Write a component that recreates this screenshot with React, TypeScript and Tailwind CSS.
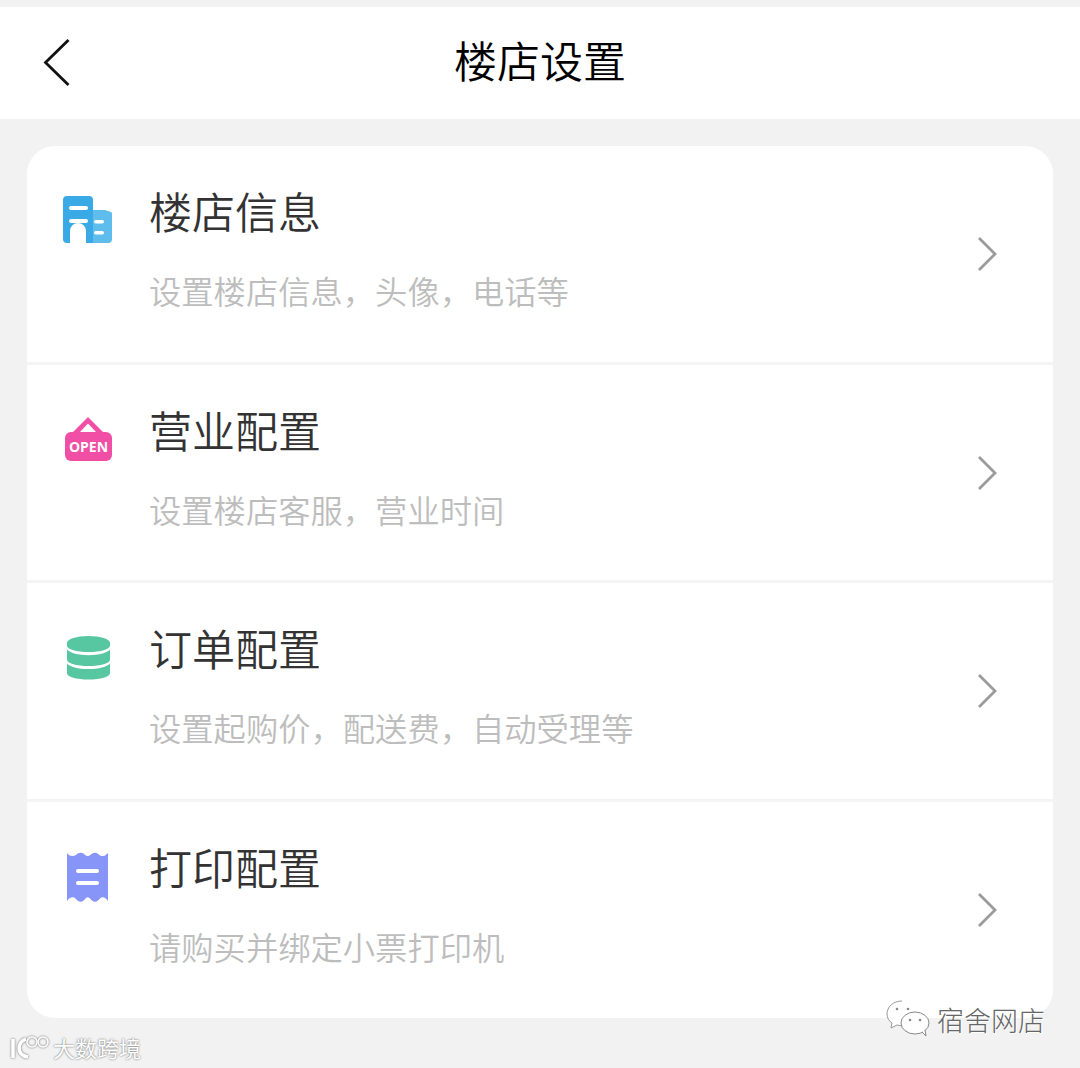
import type { ReactNode } from "react";

const rows: { title: string; desc: string; icon: ReactNode }[] = [
  {
    title: "楼店信息",
    desc: "设置楼店信息，头像，电话等",
    icon: (
      <svg width="50" height="50" viewBox="0 0 50 50">
        <path d="M30 15h12l6 2a2 2 0 0 1 1 2v25a4 4 0 0 1-4 4H30z" fill="#5fbdee" />
        <path
          d="M4 1h22a4 4 0 0 1 4 4v43h-7V36a8 8 0 0 0-16 0v12H4a4 4 0 0 1-4-4V5a4 4 0 0 1 4-4z"
          fill="#3aaae6"
        />
        <rect x="6" y="11" width="19" height="4" rx="2" fill="#fff" />
        <rect x="6" y="24" width="19" height="4" rx="2" fill="#fff" />
        <rect x="31" y="25" width="10" height="3.500" rx="1.700" fill="#fff" />
        <rect x="31" y="36" width="10" height="3.500" rx="1.700" fill="#fff" />
      </svg>
    ),
  },
  {
    title: "营业配置",
    desc: "设置楼店客服，营业时间",
    icon: (
      <svg width="50" height="50" viewBox="0 0 50 50">
        <path d="M25 3 10 18h7l8-8.500 8 8.500h7z" fill="#f04fa5" />
        <rect x="2" y="18" width="47" height="29" rx="6" fill="#f04fa5" />
        <text
          x="25.500"
          y="38"
          textAnchor="middle"
          fontSize="14"
          fontWeight="700"
          fill="#fff"
          fontFamily="'Open Sans', sans-serif"
        >
          OPEN
        </text>
      </svg>
    ),
  },
  {
    title: "订单配置",
    desc: "设置起购价，配送费，自动受理等",
    icon: (
      <svg width="50" height="52" viewBox="0 0 50 52">
        <path d="M4 11c0-4 9.500-7 21.500-7S47 7 47 11v2.500c0 4-9.500 6.500-21.500 6.500S4 17.500 4 13.500z" fill="#56c7a0" />
        <path d="M4 17.500c3 3.500 11 5.700 21.500 5.700S44 21 47 17.500V27.500c0 4-9.500 6.500-21.500 6.500S4 31.500 4 27.500z" fill="#56c7a0" />
        <path d="M4 31.500c3 3.500 11 5.500 21.500 5.500S44 35 47 31.500V41c0 4-9.500 6.500-21.500 6.500S4 45 4 41z" fill="#56c7a0" />
      </svg>
    ),
  },
  {
    title: "打印配置",
    desc: "请购买并绑定小票打印机",
    icon: (
      <svg width="50" height="52" viewBox="0 0 50 52">
        <path
          d="M4 2c1 2 3 3 6 3s4-3.300 7.700-3.300S22 5 24.700 5 28.500 1.700 32 1.700 36 5 39.300 5 43 3.500 45 2v48c-2-2.500-3-3.700-5.700-3.700S36 50.700 32 50.700s-4.500-4.400-7.300-4.400-3 4.400-7 4.400S13 46.300 10 46.300 6 47.500 4 50z"
          fill="#8895f8"
        />
        <rect x="13" y="18" width="23" height="4" rx="2" fill="#fff" />
        <rect x="13" y="30" width="23" height="4" rx="2" fill="#fff" />
      </svg>
    ),
  },
];

export default function App() {
  return (
    <div className="relative h-[1068px] overflow-hidden bg-[#f2f2f2] pt-[7px] font-['Noto_Sans_CJK_SC',sans-serif]">
      {/* Header */}
      <header className="relative flex h-[112px] items-center justify-center bg-white pb-[8px]">
        <svg className="absolute left-[42px] top-[31px]" width="30" height="48" viewBox="0 0 30 48">
          <path d="M26.500 2 3.500 24.500 26.500 47" fill="none" stroke="#111" strokeWidth="2.800" />
        </svg>
        <h1 className="text-[43px] font-[350] leading-none text-black">楼店设置</h1>
      </header>

      {/* Card */}
      <main className="mx-[27px] mt-[27px] overflow-hidden rounded-[28px] bg-white">
        {rows.map((row, i) => (
          <div
            key={row.title}
            className={
              i < 3
                ? "flex h-[218.670px] border-b-[3px] border-[#f4f4f4] pl-[36px] pr-[56px]"
                : "flex h-[216px] pl-[36px] pr-[56px]"
            }
          >
            <div className="mt-[49px] w-[86px] shrink-0">{row.icon}</div>
            <div className="flex-1 pt-[33px]">
              <div className="text-[43px] font-[350] leading-[62px] text-[#333]">{row.title}</div>
              <div className="mt-[26px] text-[32.300px] font-[350] leading-[46px] text-[#bdbdbd]">{row.desc}</div>
            </div>
            <svg className="mt-[90px]" width="20" height="36" viewBox="0 0 20 36">
              <path d="M2 2l16 16L2 34" fill="none" stroke="#9b9b9b" strokeWidth="2.800" />
            </svg>
          </div>
        ))}
      </main>

      {/* Watermarks */}
      <div className="absolute left-[9px] top-[1034px] flex items-center gap-[2px] text-[22px] leading-none text-white [text-shadow:0_0_2px_#555]">
        <svg className="drop-shadow-[0_0_1px_#666]" width="42" height="26" viewBox="0 0 42 26">
          <path d="M4 5v19M17 5C8 8 7 21 19 23" fill="none" stroke="#fff" strokeWidth="3.500" />
          <circle cx="23" cy="8" r="5" fill="none" stroke="#fff" strokeWidth="1.500" />
          <circle cx="34" cy="8" r="5" fill="none" stroke="#fff" strokeWidth="1.500" />
        </svg>
        <span>大数跨境</span>
      </div>
      <div className="absolute left-[886px] top-[1000px] flex items-center gap-[5px] text-[27px] font-light leading-none text-[#666] [text-shadow:1px_1px_0_#fff]">
        <svg width="46" height="38" viewBox="0 0 46 38">
          <path d="M16 1C7 1 1 7 1 14c0 4 2 7 5 9l-1 5 6-3c2 .5 3 .6 5 .6" fill="#fff" stroke="#999" strokeWidth="1" />
          <ellipse cx="29" cy="23" rx="14" ry="11" fill="#fff" stroke="#888" strokeWidth="1" />
          <path d="M36 32l4 4-1-6" fill="#fff" stroke="#888" strokeWidth="1" />
          <circle cx="11" cy="9" r="1.300" fill="#888" />
          <circle cx="22" cy="9" r="1.300" fill="#888" />
          <circle cx="24" cy="20" r="1.300" fill="#888" />
          <circle cx="34" cy="20" r="1.300" fill="#888" />
        </svg>
        <span>宿舍网店</span>
      </div>
    </div>
  );
}
